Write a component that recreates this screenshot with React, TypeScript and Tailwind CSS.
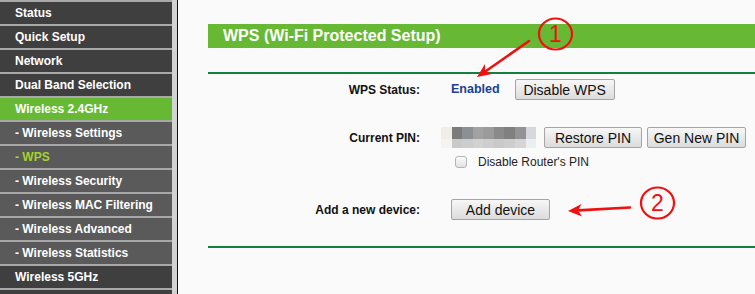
import type { ReactNode } from "react";

type Kind = "main" | "active" | "sub" | "subActive";

const menu: { label: string; kind: Kind }[] = [
  { label: "Status", kind: "main" },
  { label: "Quick Setup", kind: "main" },
  { label: "Network", kind: "main" },
  { label: "Dual Band Selection", kind: "main" },
  { label: "Wireless 2.4GHz", kind: "active" },
  { label: "- Wireless Settings", kind: "sub" },
  { label: "- WPS", kind: "subActive" },
  { label: "- Wireless Security", kind: "sub" },
  { label: "- Wireless MAC Filtering", kind: "sub" },
  { label: "- Wireless Advanced", kind: "sub" },
  { label: "- Wireless Statistics", kind: "sub" },
  { label: "Wireless 5GHz", kind: "main" },
  { label: "", kind: "main" },
];

const itemClass: Record<Kind, string> = {
  main: "bg-[#3f3f3f] text-white",
  active: "bg-[#67b934] text-white",
  sub: "bg-[#5a5a5a] text-white",
  subActive: "bg-[#5a5a5a] text-[#a5d22c]",
};

const pinTop = ["#f1eee9", "#7b7b7b", "#8b9095", "#a2a2a2", "#9b9b9b", "#8a8a8a", "#808080", "#939393", "#d5d9de"];
const pinBottom = ["#f6f4f1", "#c9c9c9", "#cdcdcd", "#d2d2d2", "#cecece", "#c9c9c9", "#cdcdcd", "#d5d5d5", "#eceef0"];

const Button = ({ children, width }: { children: ReactNode; width: string }) => (
  <button
    type="button"
    className={`${width} h-[21px] rounded-[2px] border border-[#a5a5a5] bg-linear-to-b from-[#f7f7f7] to-[#dcdcdc] text-[14px] leading-none text-[#111]`}
  >
    {children}
  </button>
);

const Row = ({ label, children, className }: { label: string; children: ReactNode; className: string }) => (
  <div className={`flex items-center ${className}`}>
    <div className="w-[212px] text-right text-[12px] font-bold text-[#111]">{label}</div>
    <div className="ml-[31px] flex items-center">{children}</div>
  </div>
);

export default function App() {
  return (
    <div
      className="relative flex h-[294px] w-[755px] overflow-hidden bg-[#fafafa]"
      style={{ fontFamily: '"Liberation Sans", Arial, sans-serif' }}
    >
      {/* sidebar */}
      <div className="flex h-full w-[178px] shrink-0">
        <div className="flex w-[172px] flex-col bg-[#a8a8a8]">
          {menu.map((m, i) => (
            <div
              key={i}
              className={`mt-[2px] flex h-[22px] shrink-0 items-center pl-[15px] text-[12px] font-bold ${itemClass[m.kind]}`}
            >
              {m.label}
            </div>
          ))}
        </div>
        <div className="w-[5px] bg-[#d2d2d2]" />
        <div className="w-[1px] bg-[#111]" />
      </div>

      {/* content */}
      <div className="flex flex-1 flex-col pl-[30px] pt-[24px]">
        <div className="flex h-[24px] items-center bg-[#67b934] pl-[15px] text-[16px] font-bold text-white">
          WPS (Wi-Fi Protected Setup)
        </div>
        <div className="mt-[24px] h-[2px] bg-[#15803d]" />

        <Row label="WPS Status:" className="mt-[5px] h-[21px]">
          <span className="mr-[15px] text-[12.5px] font-bold text-[#1b3f95]">Enabled</span>
          <Button width="w-[100px]">Disable WPS</Button>
        </Row>

        <Row label="Current PIN:" className="mt-[27px] h-[21px]">
          <div className="-ml-[10px] mr-[8px] flex w-[95px] flex-col">
            <div className="flex h-[12px]">
              {pinTop.map((c, i) => (
                <div key={i} className="flex-1" style={{ backgroundColor: c }} />
              ))}
            </div>
            <div className="flex h-[9px]">
              {pinBottom.map((c, i) => (
                <div key={i} className="flex-1" style={{ backgroundColor: c }} />
              ))}
            </div>
          </div>
          <Button width="w-[98px]">Restore PIN</Button>
          <div className="ml-[5px]">
            <Button width="w-[99px]">Gen New PIN</Button>
          </div>
        </Row>

        <div className="mt-[7px] flex h-[14px] items-center pl-[247px]">
          <div className="h-[12px] w-[12px] rounded-[3px] border border-[#b5b5b5] bg-linear-to-b from-[#fbfbfb] to-[#e2e2e2]" />
          <span className="ml-[11px] text-[12px] text-[#222]">Disable Router's PIN</span>
        </div>

        <Row label="Add a new device:" className="mt-[30px] h-[21px]">
          <Button width="w-[99px]">Add device</Button>
        </Row>

        <div className="mt-[26px] h-[2px] bg-[#15803d]" />
      </div>

      {/* annotations */}
      <svg className="pointer-events-none absolute inset-0" width="755" height="294" viewBox="0 0 755 294">
        <ellipse cx="555.5" cy="34" rx="16.5" ry="15.5" fill="none" stroke="#f01010" strokeWidth="2.2" />
        <text x="555.5" y="42" textAnchor="middle" fontSize="23" fill="#f01010" fontFamily="Liberation Sans, Arial, sans-serif">
          1
        </text>
        <line x1="529" y1="41" x2="486" y2="71" stroke="#f01010" strokeWidth="2.6" strokeLinecap="round" />
        <polygon points="477,77 492,74 485,71 485,64" fill="#f01010" />

        <ellipse cx="657.5" cy="203" rx="16.5" ry="15.5" fill="none" stroke="#f01010" strokeWidth="2.2" />
        <text x="657.5" y="211" textAnchor="middle" fontSize="23" fill="#f01010" fontFamily="Liberation Sans, Arial, sans-serif">
          2
        </text>
        <line x1="630" y1="207.5" x2="578" y2="210.4" stroke="#f01010" strokeWidth="2.6" strokeLinecap="round" />
        <polygon points="568,211 582,216.5 578,210.4 581.5,204" fill="#f01010" />
      </svg>
    </div>
  );
}
